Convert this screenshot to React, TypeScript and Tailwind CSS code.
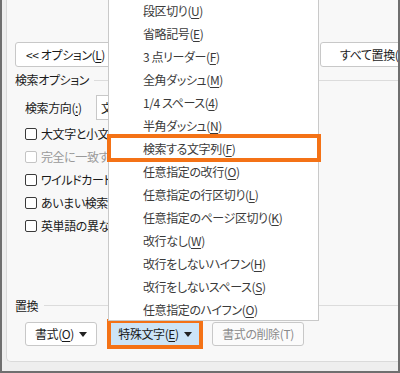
import React from 'react';

const menuItems: [string, string][] = [
  ['段区切り', 'U'],
  ['省略記号', 'E'],
  ['3 点リーダー', 'F'],
  ['全角ダッシュ', 'M'],
  ['1/4 スペース', '4'],
  ['半角ダッシュ', 'N'],
  ['検索する文字列', 'F'],
  ['任意指定の改行', 'O'],
  ['任意指定の行区切り', 'L'],
  ['任意指定のページ区切り', 'K'],
  ['改行なし', 'W'],
  ['改行をしないハイフン', 'H'],
  ['改行をしないスペース', 'S'],
  ['任意指定のハイフン', 'O'],
];

const options: { label: string; disabled?: boolean }[] = [
  { label: '大文字と小文字を区別する' },
  { label: '完全に一致する単語だけを検索する', disabled: true },
  { label: 'ワイルドカードを使用する' },
  { label: 'あいまい検索' },
  { label: '英単語の異なる活用形も検索する' },
];

const Key: React.FC<{ k: string }> = ({ k }) => (
  <>
    (<span className="underline underline-offset-2">{k}</span>)
  </>
);

const Caret = () => (
  <svg width="8" height="5" viewBox="0 0 8 5" className="ml-[5px]">
    <polygon points="0,0 8,0 4,5" fill="#222" />
  </svg>
);

export default function App() {
  return (
    <div className="relative w-[400px] h-[373px] overflow-hidden bg-[#eeeeee] border-x-2 border-b-2 border-[#6f6f6f] font-['Noto_Sans_CJK_JP',sans-serif] [font-feature-settings:'palt'] tracking-[-0.4px] text-[12px] text-[#1a1a1a]">
      {/* Dialog panel */}
      <div className="ml-[4px] h-[362px] bg-[#f8f8f8] border-l border-b border-[#dadada] rounded-bl-[5px] overflow-hidden pl-[8px]">
        <div className="h-[42px]" />

        {/* Top buttons */}
        <div className="flex h-[25px] whitespace-nowrap">
          <button className="w-[110px] shrink-0 h-[25px] rounded-[3px] border border-[#c8c8c8] bg-white text-left pl-[10px]">
            &lt;&lt; オプション<Key k="L" />
          </button>
          <button className="ml-[195px] w-[100px] shrink-0 h-[25px] rounded-[3px] border border-[#c8c8c8] bg-white text-left pl-[19px]">
            すべて置換<Key k="A" />
          </button>
        </div>

        {/* 検索オプション */}
        <div className="flex items-center h-[26px]">
          <span>検索オプション</span>
          <div className="flex-1 h-px bg-[#dcdcdc] ml-[5px]" />
        </div>

        <div className="flex items-center h-[25px] mt-[2px] pl-[10px]">
          <span className="w-[71px]">
            検索方向<Key k=":" />
          </span>
          <div className="w-[120px] h-[25px] border border-[#c8c8c8] bg-white flex items-center pl-[4px]">
            文字列全体
          </div>
        </div>

        <div className="mt-[2px] pl-[10px]">
          {options.map((o) => (
            <div key={o.label} className="flex items-center h-[23px] whitespace-nowrap">
              <span
                className={`w-[12px] h-[12px] rounded-[2px] border bg-white shrink-0 ${
                  o.disabled ? 'border-[#c4c4c4]' : 'border-[#3a3a3a]'
                }`}
              />
              <span className={`ml-[4px] ${o.disabled ? 'text-[#9a9a9a]' : ''}`}>{o.label}</span>
            </div>
          ))}
        </div>

        {/* 置換 */}
        <div className="flex items-center h-[26px] mt-[56px]">
          <span>置換</span>
          <div className="flex-1 h-px bg-[#dcdcdc] ml-[6px] -mt-[2px]" />
        </div>

        <div className="flex items-start pl-[10px] mt-[3px] whitespace-nowrap">
          <button className="w-[72px] h-[24px] rounded-[3px] border border-[#c8c8c8] bg-white flex items-center justify-center">
            書式<Key k="O" />
            <Caret />
          </button>
          <button className="ml-[14px] mt-[1px] w-[88px] h-[22px] bg-[#cce4f7] outline-[4px] outline-solid outline-[#f47216] flex items-center justify-center">
            特殊文字<Key k="E" />
            <Caret />
          </button>
          <button className="ml-[13px] w-[92px] h-[24px] rounded-[3px] border border-[#c8c8c8] bg-[#fbfbfb] text-[#8a8a8a] flex items-center justify-center">
            書式の削除(T)
          </button>
        </div>
      </div>

      {/* Dropdown menu */}
      <div className="absolute left-[106px] top-[-2px] w-[211px] h-[323px] bg-white border border-[#c9c9c9] text-[#3a3a3a]">
        {menuItems.map(([t, k], i) => (
          <div key={i} className="h-[23px] flex items-center pl-[34px] whitespace-nowrap">
            {t}
            <Key k={k} />
          </div>
        ))}
      </div>

      {/* Highlight annotation */}
      <div className="absolute left-[105px] top-[134px] w-[214px] h-[28px] border-[4px] border-[#f47216]" />
    </div>
  );
}
